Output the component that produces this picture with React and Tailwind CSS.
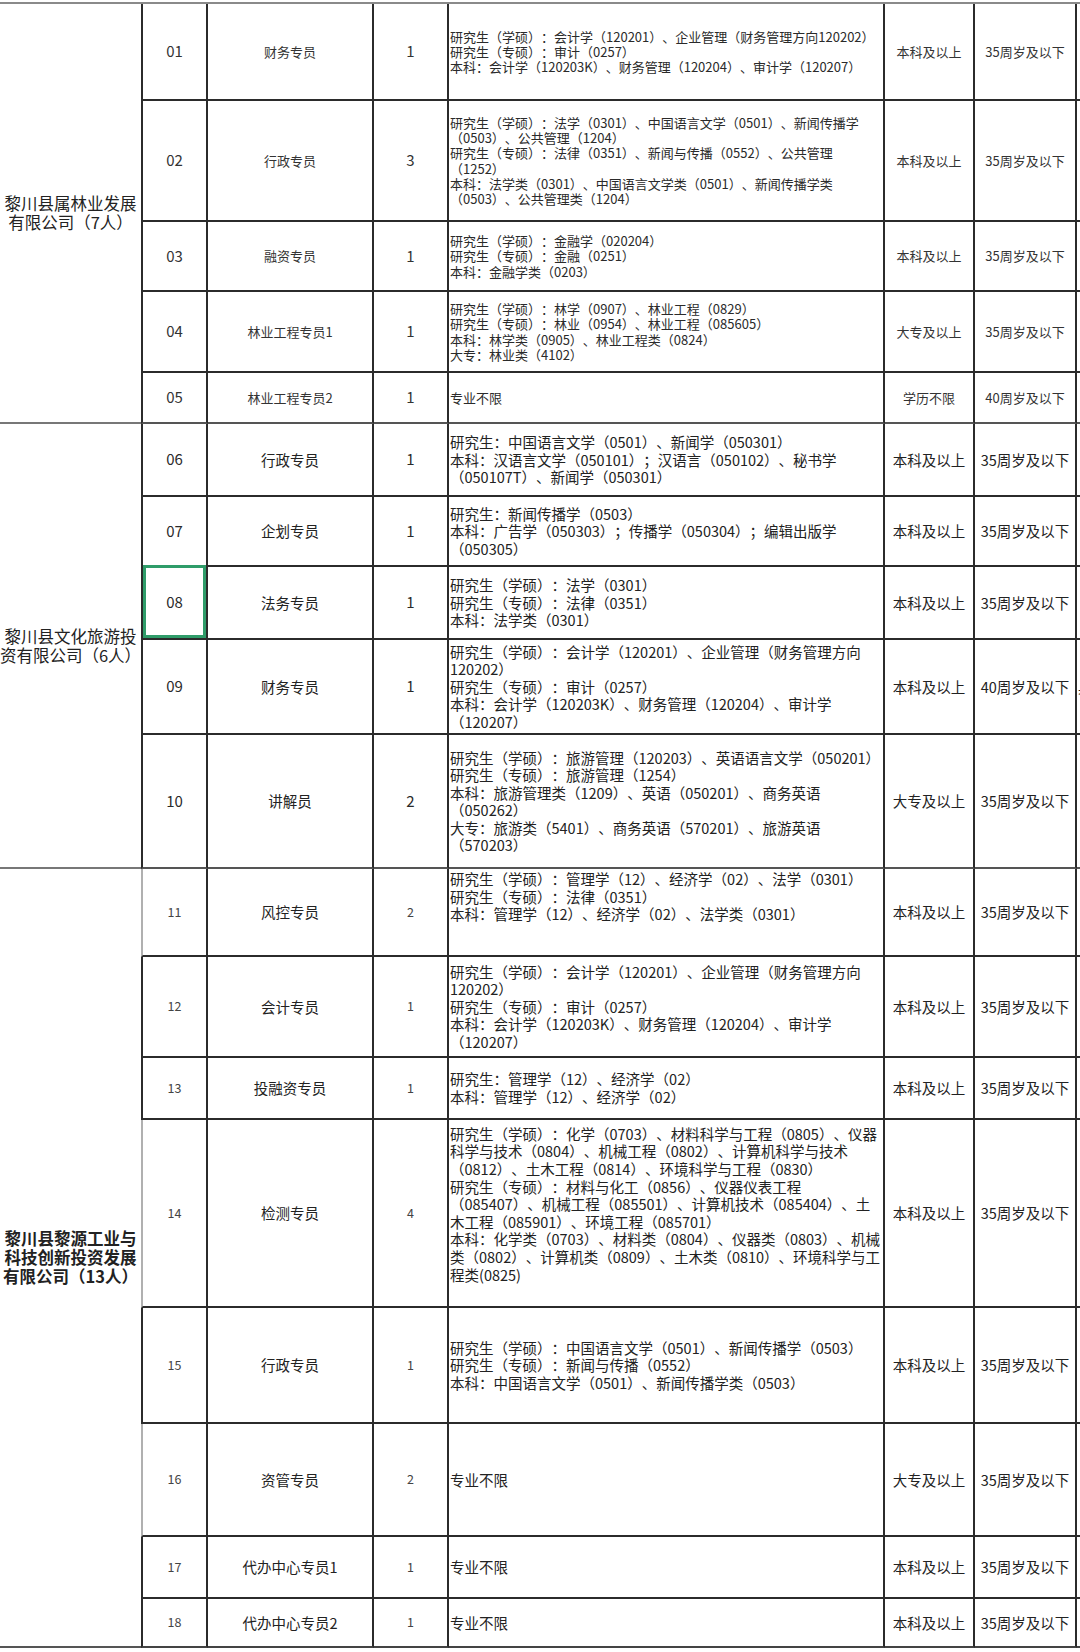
import React from 'react';

const CJK = "font-['Noto_Sans_CJK_SC',sans-serif]";
const NARROW = "font-['Liberation_Sans_Narrow','Noto_Sans_CJK_SC',sans-serif]";

// per-company text sizes
const tones = {
  g1: {
    no: 'text-[15px] text-[#333]',
    title: 'text-[13px] text-[#333]',
    count: 'text-[15px] text-[#333]',
    major: 'text-[13px] leading-[15.3px] text-[#2a2a2a]',
    edu: 'text-[13px] text-[#333]',
  },
  g2: {
    no: 'text-[15px] text-[#2a2a2a]',
    title: 'text-[14.5px] text-[#222]',
    count: 'text-[15px] text-[#2a2a2a]',
    major: 'text-[14.5px] leading-[17.5px] text-[#222]',
    edu: 'text-[14.5px] text-[#222]',
  },
  g3: {
    no: 'text-[12.5px] text-[#444]',
    title: 'text-[14.5px] text-[#222]',
    count: 'text-[12.5px] text-[#444]',
    major: 'text-[14.5px] leading-[17.6px] text-[#222]',
    edu: 'text-[14.5px] text-[#222]',
  },
};

const groups = [
  {
    name: ['黎川县属林业发展', '有限公司（7人）'],
    bold: false,
    tone: 'g1',
    rows: [
      {
        no: '01', title: '财务专员', count: '1', edu: '本科及以上', age: '35周岁及以下',
        major: [
          '研究生（学硕）：会计学（120201）、企业管理（财务管理方向120202）',
          '研究生（专硕）：审计（0257）',
          '本科：会计学（120203K）、财务管理（120204）、审计学（120207）',
        ],
      },
      {
        no: '02', title: '行政专员', count: '3', edu: '本科及以上', age: '35周岁及以下',
        major: [
          '研究生（学硕）：法学（0301）、中国语言文学（0501）、新闻传播学',
          '（0503）、公共管理（1204）',
          '研究生（专硕）：法律（0351）、新闻与传播（0552）、公共管理',
          '（1252）',
          '本科：法学类（0301）、中国语言文学类（0501）、新闻传播学类',
          '（0503）、公共管理类（1204）',
        ],
      },
      {
        no: '03', title: '融资专员', count: '1', edu: '本科及以上', age: '35周岁及以下',
        major: ['研究生（学硕）：金融学（020204）', '研究生（专硕）：金融（0251）', '本科：金融学类（0203）'],
      },
      {
        no: '04', title: '林业工程专员1', count: '1', edu: '大专及以上', age: '35周岁及以下',
        major: [
          '研究生（学硕）：林学（0907）、林业工程（0829）',
          '研究生（专硕）：林业（0954）、林业工程（085605）',
          '本科：林学类（0905）、林业工程类（0824）',
          '大专：林业类（4102）',
        ],
      },
      {
        no: '05', title: '林业工程专员2', count: '1', edu: '学历不限', age: '40周岁及以下',
        major: ['专业不限'], last: true,
      },
    ],
  },
  {
    name: ['黎川县文化旅游投', '资有限公司（6人）'],
    bold: false,
    tone: 'g2',
    rows: [
      {
        no: '06', title: '行政专员', count: '1', edu: '本科及以上', age: '35周岁及以下',
        major: [
          '研究生：中国语言文学（0501）、新闻学（050301）',
          '本科：汉语言文学（050101）；汉语言（050102）、秘书学',
          '（050107T）、新闻学（050301）',
        ],
      },
      {
        no: '07', title: '企划专员', count: '1', edu: '本科及以上', age: '35周岁及以下',
        major: ['研究生：新闻传播学（0503）', '本科：广告学（050303）；传播学（050304）；编辑出版学', '（050305）'],
      },
      {
        no: '08', title: '法务专员', count: '1', edu: '本科及以上', age: '35周岁及以下', selected: true,
        major: ['研究生（学硕）：法学（0301）', '研究生（专硕）：法律（0351）', '本科：法学类（0301）'],
      },
      {
        no: '09', title: '财务专员', count: '1', edu: '本科及以上', age: '40周岁及以下', extra: '具',
        major: [
          '研究生（学硕）：会计学（120201）、企业管理（财务管理方向',
          '120202）',
          '研究生（专硕）：审计（0257）',
          '本科：会计学（120203K）、财务管理（120204）、审计学',
          '（120207）',
        ],
      },
      {
        no: '10', title: '讲解员', count: '2', edu: '大专及以上', age: '35周岁及以下', last: true,
        major: [
          '研究生（学硕）：旅游管理（120203）、英语语言文学（050201）',
          '研究生（专硕）：旅游管理（1254）',
          '本科：旅游管理类（1209）、英语（050201）、商务英语',
          '（050262）',
          '大专：旅游类（5401）、商务英语（570201）、旅游英语',
          '（570203）',
        ],
      },
    ],
  },
  {
    name: ['黎川县黎源工业与', '科技创新投资发展', '有限公司（13人）'],
    bold: true,
    tone: 'g3',
    rows: [
      {
        no: '11', title: '风控专员', count: '2', edu: '本科及以上', age: '35周岁及以下', grey: true, top: true,
        major: [
          '研究生（学硕）：管理学（12）、经济学（02）、法学（0301）',
          '研究生（专硕）：法律（0351）',
          '本科：管理学（12）、经济学（02）、法学类（0301）',
        ],
      },
      {
        no: '12', title: '会计专员', count: '1', edu: '本科及以上', age: '35周岁及以下',
        major: [
          '研究生（学硕）：会计学（120201）、企业管理（财务管理方向',
          '120202）',
          '研究生（专硕）：审计（0257）',
          '本科：会计学（120203K）、财务管理（120204）、审计学',
          '（120207）',
        ],
      },
      {
        no: '13', title: '投融资专员', count: '1', edu: '本科及以上', age: '35周岁及以下',
        major: ['研究生：管理学（12）、经济学（02）', '本科：管理学（12）、经济学（02）'],
      },
      {
        no: '14', title: '检测专员', count: '4', edu: '本科及以上', age: '35周岁及以下', grey: true, lift: true,
        major: [
          '研究生（学硕）：化学（0703）、材料科学与工程（0805）、仪器',
          '科学与技术（0804）、机械工程（0802）、计算机科学与技术',
          '（0812）、土木工程（0814）、环境科学与工程（0830）',
          '研究生（专硕）：材料与化工（0856）、仪器仪表工程',
          '（085407）、机械工程（085501）、计算机技术（085404）、土',
          '木工程（085901）、环境工程（085701）',
          '本科：化学类（0703）、材料类（0804）、仪器类（0803）、机械',
          '类（0802）、计算机类（0809）、土木类（0810）、环境科学与工',
          '程类(0825)',
        ],
      },
      {
        no: '15', title: '行政专员', count: '1', edu: '本科及以上', age: '35周岁及以下',
        major: [
          '研究生（学硕）：中国语言文学（0501）、新闻传播学（0503）',
          '研究生（专硕）：新闻与传播（0552）',
          '本科：中国语言文学（0501）、新闻传播学类（0503）',
        ],
      },
      {
        no: '16', title: '资管专员', count: '2', edu: '大专及以上', age: '35周岁及以下', grey: true,
        major: ['专业不限'],
      },
      {
        no: '17', title: '代办中心专员1', count: '1', edu: '本科及以上', age: '35周岁及以下',
        major: ['专业不限'],
      },
      {
        no: '18', title: '代办中心专员2', count: '1', edu: '本科及以上', age: '35周岁及以下', end: true,
        major: ['专业不限'],
      },
    ],
  },
];

const rowSpans = ['row-span-5', 'row-span-5', 'row-span-8'];

function bottomLine(row) {
  if (row.end) return 'border-b-2 border-b-[#444]';
  if (row.last) return 'border-b-2 border-b-[#555]';
  return 'border-b-2 border-b-[#2b2b2b]';
}

function JobRow({ row, tone }) {
  const t = tones[tone];
  const b = bottomLine(row);
  const center = 'flex items-center justify-center text-center';
  return (
    <>
      <div
        className={`relative ${center} ${b} border-r-2 border-r-[#2b2b2b] border-l-2 ${
          row.grey ? 'border-l-[#b0b0b0]' : 'border-l-[#2b2b2b]'
        } ${NARROW} ${t.no}`}
      >
        {row.no}
        {row.selected && (
          <span className="absolute inset-x-0 bottom-0 -top-[2px] z-10 border-[3px] border-[#2f9c69]" />
        )}
      </div>
      <div className={`${center} ${b} border-r-2 border-r-[#2b2b2b] ${NARROW} ${t.title}`}>{row.title}</div>
      <div className={`${center} ${b} border-r-2 border-r-[#2b2b2b] ${NARROW} ${t.count}`}>{row.count}</div>
      <div
        className={`flex flex-col overflow-hidden pl-[1px] ${row.top ? 'justify-start pt-px' : 'justify-center'} ${
          row.lift ? 'pb-[18px]' : ''
        } ${b} border-r-2 border-r-[#2b2b2b] ${NARROW} ${t.major}`}
      >
        {row.major.map((line, i) => (
          <div key={i} className="whitespace-nowrap">
            {line}
          </div>
        ))}
      </div>
      <div className={`${center} ${b} border-r-2 border-r-[#2b2b2b] ${NARROW} ${t.edu}`}>{row.edu}</div>
      <div className={`${center} ${b} border-r-2 border-r-[#2b2b2b] ${NARROW} ${t.edu}`}>{row.age}</div>
      <div className={`flex items-center overflow-hidden pl-px ${b} ${CJK} text-[14.5px] text-[#222]`}>
        {row.extra}
      </div>
    </>
  );
}

export default function App() {
  return (
    <div className="w-[1080px] h-[1652px] overflow-hidden bg-white pt-[2px] [text-spacing-trim:space-all]">
      <div className="grid w-[1120px] grid-cols-[141px_67px_166px_75px_436px_90px_102px_43px] grid-rows-[97px_121px_70px_81px_51px_73px_70px_73px_95px_134px_88px_101px_62px_188px_116px_113px_62px_49px] border-t-2 border-t-[#8a8a8a]">
        {groups.map((g, gi) => (
          <React.Fragment key={gi}>
            <div
              className={`${rowSpans[gi]} flex flex-col items-center justify-center border-b-2 ${
                gi === 2 ? 'border-b-[#555]' : 'border-b-[#777]'
              } ${CJK} text-[16.5px] leading-[19px] text-[#222] ${g.bold ? 'font-semibold' : 'font-normal'}`}
            >
              {g.name.map((n, i) => (
                <span key={i} className="whitespace-nowrap">
                  {n}
                </span>
              ))}
            </div>
            {g.rows.map((r) => (
              <JobRow key={r.no} row={r} tone={g.tone} />
            ))}
          </React.Fragment>
        ))}
      </div>
    </div>
  );
}
